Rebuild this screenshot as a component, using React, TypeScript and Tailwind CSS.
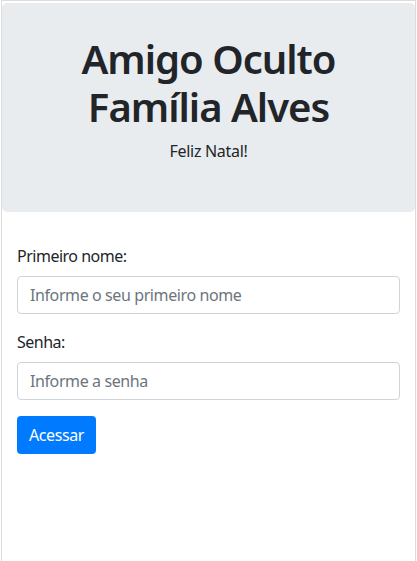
import React from "react";

const font = { fontFamily: '"Segoe UI", "Noto Sans", "Open Sans", sans-serif' };

function Field({
  label,
  placeholder,
  type = "text",
}: {
  label: string;
  placeholder: string;
  type?: string;
}) {
  return (
    <div className="mb-4">
      <label className="mb-2 block text-base leading-6 tracking-[-0.5px] text-[#212529]">
        {label}
      </label>
      <input
        type={type}
        placeholder={placeholder}
        className="block h-[38px] w-full rounded-[4px] border border-[#ced4da] bg-white px-3 text-base tracking-[-0.4px] text-[#495057] placeholder:text-[#6c757d] focus:outline-none"
      />
    </div>
  );
}

export default function App() {
  return (
    <div className="min-h-screen bg-white pl-[1px] text-[#212529]" style={font}>
      <div className="min-h-[561px] w-[415px] border-x border-t border-[#dcdcdc] pt-[2px]">
        <div className="mb-8 rounded-[5px] bg-[#e9ecef] px-4 pt-8 pb-[33px] text-center">
          <h1 className="mb-2 text-[40px] font-semibold leading-[48px] tracking-[-1px]">
            Amigo Oculto Família Alves
          </h1>
          <p className="mb-4 text-base leading-6 tracking-[-0.3px]">Feliz Natal!</p>
        </div>

        <form className="px-[15px]">
          <Field label="Primeiro nome:" placeholder="Informe o seu primeiro nome" />
          <Field label="Senha:" placeholder="Informe a senha" type="password" />
          <button
            type="button"
            className="h-[38px] rounded-[4px] bg-[#007bff] px-3 text-base leading-6 tracking-[-0.4px] text-white"
          >
            Acessar
          </button>
        </form>
      </div>
    </div>
  );
}
